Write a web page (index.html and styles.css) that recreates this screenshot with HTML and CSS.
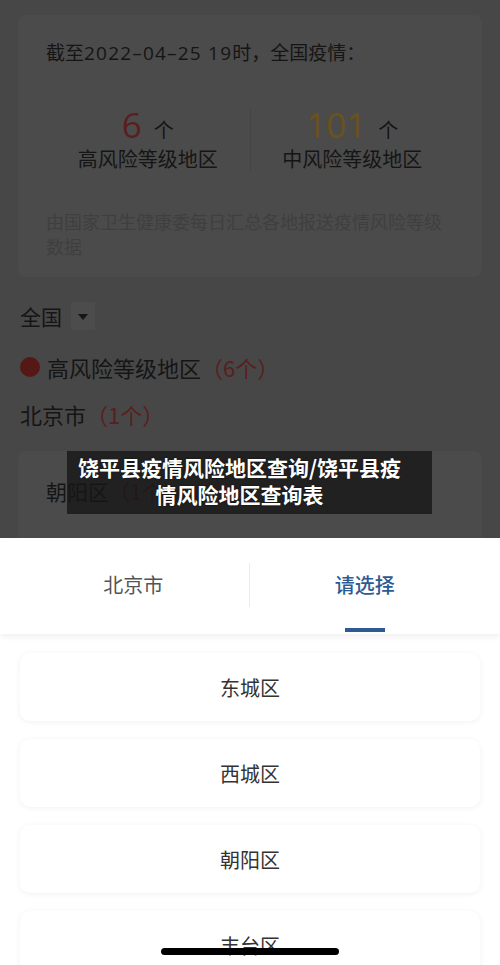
FILE: index.html
```html
<!DOCTYPE html>
<html lang="zh-CN">
<head>
    <meta charset="UTF-8">
    <meta name="viewport" content="width=device-width, initial-scale=1.0">
    <title>饶平县疫情风险地区查询</title>
    <link rel="stylesheet" href="styles.css">
</head>
<body>
    <div class="screen">
        <div class="backdrop">
            <div class="summary-card">
                <p class="summary-title">截至<span class="date">2022–04–25 19</span>时，全国疫情：</p>
                <div class="stats">
                    <div class="stat">
                        <div class="stat-num"><span class="num high">6</span><span>个</span></div>
                        <div class="stat-label">高风险等级地区</div>
                    </div>
                    <div class="stat-divider"></div>
                    <div class="stat">
                        <div class="stat-num"><span class="num mid">101</span><span>个</span></div>
                        <div class="stat-label">中风险等级地区</div>
                    </div>
                </div>
                <p class="summary-note">由国家卫生健康委每日汇总各地报送疫情风险等级数据</p>
            </div>

            <div class="region-select">
                <span>全国</span>
                <span class="select-arrow"></span>
            </div>

            <div class="level-title">
                <span class="dot"></span>
                <span>高风险等级地区</span><span class="count">（6个）</span>
            </div>

            <div class="city-title">北京市<span class="count">（1个）</span></div>

            <div class="district-card">
                <span>朝阳区</span><span class="count">（1个）</span>
            </div>

            <div class="caption">饶平县疫情风险地区查询/饶平县疫<br>情风险地区查询表</div>
        </div>

        <div class="sheet">
            <div class="tabs">
                <div class="tab">
                    <span>北京市</span>
                </div>
                <div class="tab-divider"></div>
                <div class="tab active">
                    <span>请选择</span>
                    <span class="tab-bar"></span>
                </div>
            </div>

            <div class="options">
                <div class="option">东城区</div>
                <div class="option">西城区</div>
                <div class="option">朝阳区</div>
                <div class="option">丰台区</div>
            </div>
        </div>

        <div class="home-indicator"></div>
    </div>
</body>
</html>
```

FILE: styles.css
```css
body, html {
    margin: 0;
    padding: 0;
    font-family: "Noto Sans CJK SC", "Noto Sans", sans-serif;
    color: #333;
}

.screen {
    position: relative;
    width: 500px;
    height: 965px;
    display: flex;
    flex-direction: column;
    overflow: hidden;
    background-color: #fff;
}

/* dimmed page behind the picker */
.backdrop {
    position: relative;
    height: 538px;
    flex-shrink: 0;
    background-color: #474747;
    padding: 15px 18px 0;
    box-sizing: border-box;
    overflow: hidden;
    color: #151515;
}

.summary-card {
    background-color: #4b4b4b;
    border-radius: 8px;
    padding: 24px 28px 18px;
}

.summary-title {
    margin: 0;
    font-size: 19px;
    line-height: 26px;
    height: 26px;
}

.date {
    font-family: "Open Sans", "Noto Sans", sans-serif;
    letter-spacing: 1.2px;
}

.stats {
    display: flex;
    align-items: center;
    margin-top: 41px;
}

.stat {
    flex: 1;
    text-align: center;
}

.stat-num {
    display: flex;
    justify-content: center;
    align-items: baseline;
    height: 38px;
    font-size: 20px;
    line-height: 38px;
}

.num {
    font-family: "Open Sans", "Noto Sans", sans-serif;
    font-size: 35px;
    margin-right: 12px;
}

.num.high {
    color: #5a1e1e;
}

.num.mid {
    color: #6a5318;
}

.stat-label {
    font-size: 20px;
    line-height: 30px;
}

.stat-divider {
    width: 1px;
    height: 62px;
    background-color: #444;
}

.summary-note {
    margin: 35px 0 0;
    font-size: 18px;
    line-height: 25px;
    color: #3f3f3f;
}

.region-select {
    display: flex;
    align-items: center;
    height: 30px;
    margin-top: 24px;
    padding-left: 2px;
    font-size: 21px;
    line-height: 30px;
}

.select-arrow {
    position: relative;
    width: 24px;
    height: 28px;
    margin-left: 9px;
    background-color: #4c4c4c;
}

.select-arrow::after {
    content: "";
    position: absolute;
    left: 7px;
    top: 12px;
    border-left: 5px solid transparent;
    border-right: 5px solid transparent;
    border-top: 6px solid #151515;
}

.level-title {
    display: flex;
    align-items: center;
    height: 30px;
    margin-top: 21px;
    padding-left: 2px;
    font-size: 22px;
    line-height: 30px;
}

.dot {
    width: 20px;
    height: 20px;
    border-radius: 50%;
    background-color: #561814;
    margin-right: 7px;
}

.count {
    color: #5a1e1e;
}

.city-title {
    height: 30px;
    margin-top: 17px;
    padding-left: 2px;
    font-size: 22px;
    line-height: 30px;
}

.district-card {
    margin-top: 22px;
    height: 120px;
    background-color: #4b4b4b;
    border-radius: 8px;
    padding: 25px 28px 0;
    font-size: 21px;
    line-height: 30px;
}

.caption {
    position: absolute;
    left: 67px;
    top: 451px;
    width: 365px;
    height: 63px;
    box-sizing: border-box;
    padding: 3px 20px 0 0;
    background-color: rgba(22, 22, 22, 0.78);
    color: #fff;
    font-size: 21px;
    font-weight: bold;
    line-height: 27px;
    text-align: center;
    text-shadow: 0 0 2px rgba(0, 0, 0, 0.6);
}

/* picker sheet */
.sheet {
    flex: 1;
    background-color: #fff;
}

.tabs {
    position: relative;
    display: flex;
    height: 96px;
    background-color: #fff;
    box-shadow: 0 3px 6px rgba(0, 0, 0, 0.06);
}

.tab {
    flex: 1;
    display: flex;
    flex-direction: column;
    align-items: center;
    padding: 33px 0 0 18px;
    font-size: 20px;
    line-height: 28px;
    color: #555;
}

.tab.active {
    padding: 33px 20px 0 0;
    color: #2d5a93;
    font-weight: 500;
}

.tab-bar {
    width: 40px;
    height: 4px;
    margin-top: 29px;
    background-color: #2d5a93;
}

.tab-divider {
    width: 1px;
    height: 44px;
    margin-top: 25px;
    background-color: #ececec;
}

.options {
    display: flex;
    flex-direction: column;
    gap: 18px;
    padding: 19px 20px 0;
}

.option {
    height: 68px;
    flex-shrink: 0;
    display: flex;
    align-items: center;
    justify-content: center;
    background-color: #fff;
    border-radius: 10px;
    box-shadow: 0 1px 6px rgba(0, 0, 0, 0.06);
    font-size: 20px;
    color: #333;
}

.home-indicator {
    position: absolute;
    left: 161px;
    top: 948px;
    width: 178px;
    height: 7px;
    border-radius: 4px;
    background-color: #000;
}
```
